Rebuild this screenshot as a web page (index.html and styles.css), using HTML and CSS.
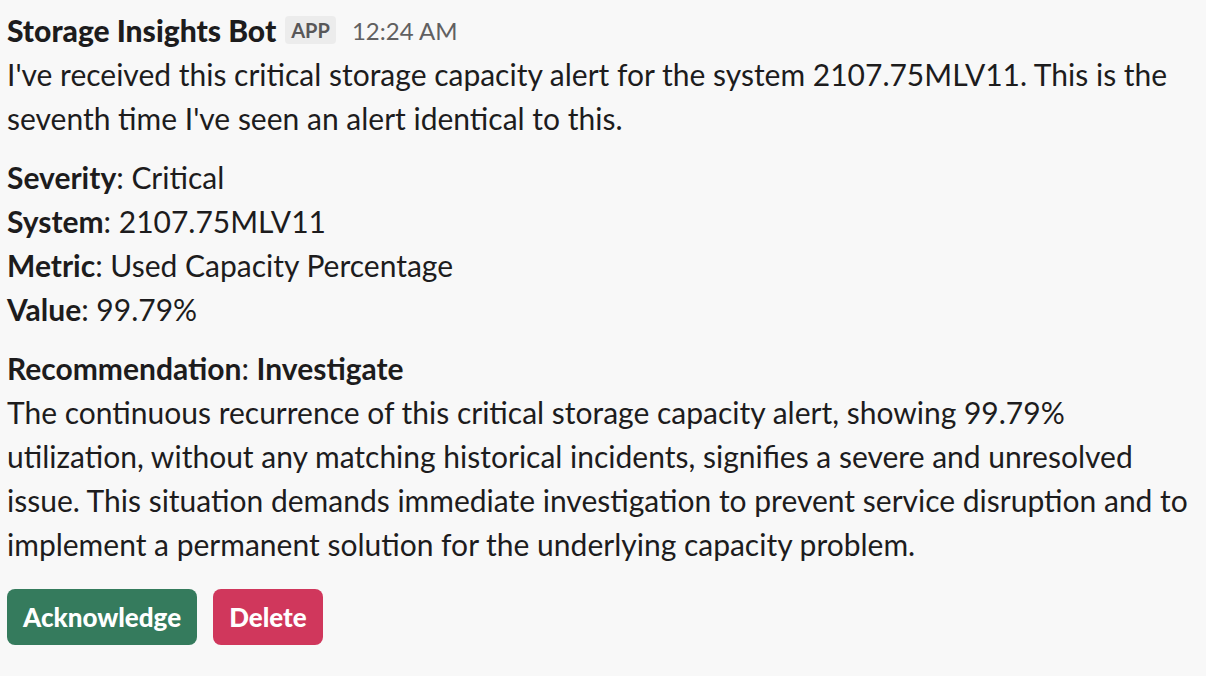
FILE: index.html
```html
<!DOCTYPE html>
<html>
<head>
<meta charset="utf-8">
<link rel="stylesheet" href="styles.css">
</head>
<body>
<div class="message">
  <div class="header">
    <span class="name">Storage Insights Bot</span>
    <span class="badge">APP</span>
    <span class="time">12:24 AM</span>
  </div>
  <p class="para">I've received this critical storage capacity alert for the system 2107.75MLV11. This is the seventh time I've seen an alert identical to this.</p>
  <p class="para">
    <b>Severity</b>: Critical<br>
    <b>System</b>: 2107.75MLV11<br>
    <b>Metric</b>: Used Capacity Percentage<br>
    <b>Value</b>: 99.79%
  </p>
  <p class="para">
    <b>Recommendation</b>: <b>Investigate</b><br>
    The continuous recurrence of this critical storage capacity alert, showing 99.79% utilization, without any matching historical incidents, signifies a severe and unresolved issue. This situation demands immediate investigation to prevent service disruption and to implement a permanent solution for the underlying capacity problem.
  </p>
  <div class="actions">
    <button class="btn btn-primary">Acknowledge</button>
    <button class="btn btn-danger">Delete</button>
  </div>
</div>
</body>
</html>
```
FILE: styles.css
```css
html, body {
  margin: 0;
  padding: 0;
  background: #f8f8f8;
}
body {
  font-family: Lato, "Noto Sans", sans-serif;
  color: #1d1c1d;
}
.message {
  padding: 8px 7px 0 7px;
  width: 1192px;
}
.header {
  display: flex;
  align-items: center;
  height: 44px;
}
.name {
  font-weight: 900;
  font-size: 30px;
}
.badge {
  margin-left: 9px;
  background: #ececec;
  color: #585758;
  font-size: 20px;
  font-weight: 700;
  padding: 0 6px;
  height: 28px;
  line-height: 28px;
  border-radius: 4px;
}
.time {
  margin-left: 16px;
  color: #616061;
  font-size: 24px;
}
.para {
  margin: 0 0 15px 0;
  font-size: 30px;
  line-height: 44px;
}
.para b {
  font-weight: 700;
}
.actions {
  display: flex;
  gap: 16px;
  margin-top: 23px;
}
.btn {
  font-family: Lato, sans-serif;
  font-weight: 900;
  font-size: 26px;
  color: #fff;
  border: none;
  border-radius: 8px;
  height: 56px;
  padding: 0 16px;
}
.btn-primary {
  background: #357b5d;
}
.btn-danger {
  background: #d0375c;
}
```
